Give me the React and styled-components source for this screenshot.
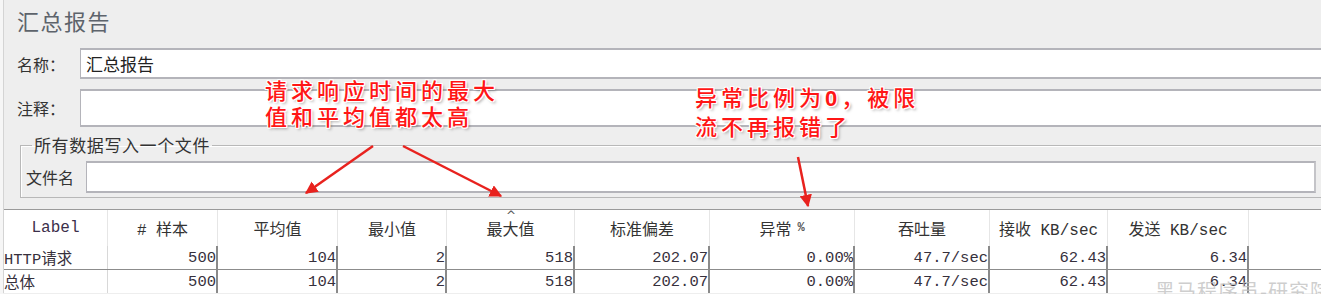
import React from "react";
import styled, { createGlobalStyle } from "styled-components";

const GlobalStyle = createGlobalStyle`
    html, body {
        margin: 0;
        padding: 0;
        background: #eeeeee;
    }
    * {
        box-sizing: border-box;
    }
`;

const cjk = `"Noto Sans CJK SC", "Noto Sans", sans-serif`;
const mono = `"Liberation Mono", "Noto Sans CJK SC", monospace`;

const columns = [
    { title: "Label", width: 104 },
    { title: "# 样本", width: 110 },
    { title: "平均值", width: 120 },
    { title: "最小值", width: 109 },
    { title: "最大值", width: 128, sorted: true },
    { title: "标准偏差", width: 135 },
    { title: "异常 %", width: 145 },
    { title: "吞吐量", width: 135 },
    { title: "接收 KB/sec", width: 118 },
    { title: "发送 KB/sec", width: 141 },
];

const rows = [
    ["HTTP请求", "500", "104", "2", "518", "202.07", "0.00%", "47.7/sec", "62.43", "6.34"],
    ["总体", "500", "104", "2", "518", "202.07", "0.00%", "47.7/sec", "62.43", "6.34"],
];

const gridTemplate = columns.map((c) => `${c.width}px`).join(" ") + " 1fr";

export default function App() {
    return (
        <>
            <GlobalStyle />
            <Root>
                <Panel>
                    <Title>汇总报告</Title>
                    <FieldRow $indent={13}>
                        <FieldLabel>名称：</FieldLabel>
                        <TextBox $height={31}>汇总报告</TextBox>
                    </FieldRow>
                    <FieldRow $indent={13} $gap={10}>
                        <FieldLabel>注释：</FieldLabel>
                        <TextBox $height={38} />
                    </FieldRow>
                    <FileGroup>
                        <legend>所有数据写入一个文件</legend>
                        <FieldRow>
                            <FieldLabel $width={60}>文件名</FieldLabel>
                            <TextBox $height={32} $boxed />
                        </FieldRow>
                    </FileGroup>
                    <Table>
                        <HeaderRow>
                            {columns.map((c) => (
                                <HeaderCell key={c.title} $latin={c.title === "Label"}>
                                    {c.sorted && <SortCaret>^</SortCaret>}
                                    {c.title === "异常 %" ? (
                                        <>
                                            异常 <Percent>%</Percent>
                                        </>
                                    ) : (
                                        c.title
                                    )}
                                </HeaderCell>
                            ))}
                            <HeaderCell $last />
                        </HeaderRow>
                        {rows.map((r, i) => (
                            <DataRow key={i} $first={i === 0}>
                                {r.map((v, j) => (
                                    <DataCell key={j} $label={j === 0}>
                                        {v}
                                    </DataCell>
                                ))}
                                <DataCell $last />
                            </DataRow>
                        ))}
                    </Table>
                </Panel>

                <Note $left={265} $top={76}>
                    请求响应时间的最大
                    <br />
                    值和平均值都太高
                </Note>
                <Note $left={695} $top={83}>
                    异常比例为<b>0</b>，被限
                    <br />
                    流不再报错了
                </Note>
                <Arrows width="1321" height="294" viewBox="0 0 1321 294">
                    <defs>
                        <marker
                            id="head"
                            viewBox="0 0 10 10"
                            refX="9"
                            refY="5"
                            markerWidth="5"
                            markerHeight="5"
                            orient="auto"
                        >
                            <path d="M0 0 L10 5 L0 10 Z" fill="#e8221e" />
                        </marker>
                    </defs>
                    <line x1="373" y1="146" x2="306" y2="193" stroke="#e8221e" strokeWidth="2.5" markerEnd="url(#head)" />
                    <line x1="403" y1="146" x2="501" y2="196" stroke="#e8221e" strokeWidth="2.5" markerEnd="url(#head)" />
                    <line x1="798" y1="157" x2="808" y2="206" stroke="#e8221e" strokeWidth="2.5" markerEnd="url(#head)" />
                </Arrows>
                <Watermark>黑马程序员-研究院</Watermark>
            </Root>
        </>
    );
}

const Root = styled.div`
    position: relative;
    width: 1321px;
    height: 294px;
    overflow: hidden;
    background: #eeeeee;
    background-image: linear-gradient(to right, #f6f6f6 0, #f6f6f6 3px, transparent 3px);
`;

const Panel = styled.div`
    margin-left: 3px;
    width: 1323px;
    border-left: 1px solid #d4d4d4;
    display: flex;
    flex-direction: column;
`;

const Title = styled.div`
    height: 48px;
    padding: 6px 0 0 13px;
    font-family: ${cjk};
    font-size: 22px;
    line-height: 28px;
    letter-spacing: 1.5px;
    color: #5d636b;
`;

const FieldRow = styled.div`
    display: flex;
    align-items: center;
    margin-top: ${(p) => p.$gap || 0}px;
    padding-left: ${(p) => p.$indent || 0}px;
`;

const FieldLabel = styled.div`
    width: ${(p) => p.$width || 63}px;
    flex-shrink: 0;
    font-family: ${cjk};
    font-size: 16px;
    color: #333333;
`;

const TextBox = styled.div`
    flex: 1;
    height: ${(p) => p.$height}px;
    background: #ffffff;
    border-top: 2px solid #b4b4ba;
    border-left: 1px solid #b4b4ba;
    border-bottom: 2px solid #b4b4ba;
    border-right: ${(p) => (p.$boxed ? "2px solid #c4c4c8" : "none")};
    padding-left: 5px;
    display: flex;
    align-items: center;
    font-family: ${cjk};
    font-size: 17px;
    color: #222222;
`;

const FileGroup = styled.fieldset`
    margin: 8px 4px 0 16px;
    padding: 6px 5px 4px 5px;
    border: 1px solid #b8b8b8;
    box-shadow: inset 1px 1px 0 #ffffff;

    legend {
        margin-left: 6px;
        padding: 0 2px;
        font-family: ${cjk};
        font-size: 17px;
        line-height: 20px;
        letter-spacing: 0.6px;
        color: #333333;
    }
`;

const Table = styled.div`
    margin-top: 11px;
    border-top: 1px solid #9a9a9a;
    background: #ffffff;
`;

const HeaderRow = styled.div`
    display: grid;
    grid-template-columns: ${gridTemplate};
    height: 36px;
`;

const HeaderCell = styled.div`
    position: relative;
    display: flex;
    align-items: center;
    justify-content: center;
    border-right: ${(p) => (p.$last ? "none" : "1px solid #e6e6e6")};
    font-family: ${mono};
    font-size: 16px;
    color: ${(p) => (p.$latin ? "#3b2f4a" : "#333333")};
    white-space: nowrap;
`;

const SortCaret = styled.span`
    position: absolute;
    top: -1px;
    left: 59px;
    font-family: "DejaVu Sans", sans-serif;
    font-size: 12px;
    color: #555555;
`;

const Percent = styled.span`
    font-size: 12px;
    font-weight: bold;
    margin-left: 6px;
    color: #555555;
`;

const DataRow = styled.div`
    display: grid;
    grid-template-columns: ${gridTemplate};
    height: ${(p) => (p.$first ? 24 : 23)}px;
    border-bottom: ${(p) => (p.$first ? "1px solid #8c8c8c" : "none")};
`;

const DataCell = styled.div`
    display: flex;
    align-items: center;
    justify-content: ${(p) => (p.$label ? "flex-start" : "flex-end")};
    border-right: ${(p) =>
        p.$last ? "none" : p.$label ? "1px solid #d8d8d8" : "2px solid #8a8a8a"};
    font-family: ${mono};
    font-size: 15.5px;
    color: #36303c;
    white-space: nowrap;
`;

const Note = styled.div`
    position: absolute;
    left: ${(p) => p.$left}px;
    top: ${(p) => p.$top}px;
    font-family: ${cjk};
    font-size: 22px;
    font-weight: 500;
    line-height: 26px;
    letter-spacing: 4px;
    color: #ff1616;
    text-shadow: 1px 0 0 #fff, -1px 0 0 #fff, 0 1px 0 #fff, 0 -1px 0 #fff,
        1px 1px 0 #fff, -1px -1px 0 #fff, 1px -1px 0 #fff, -1px 1px 0 #fff,
        2px 2px 3px rgba(0, 0, 0, 0.35);

    b {
        font-family: "Liberation Sans", sans-serif;
        font-weight: bold;
        letter-spacing: 4px;
    }
`;

const Arrows = styled.svg`
    position: absolute;
    left: 0;
    top: 0;
    pointer-events: none;
`;

const Watermark = styled.div`
    position: absolute;
    left: 1155px;
    top: 276px;
    font-family: ${cjk};
    font-size: 20px;
    letter-spacing: 1px;
    color: rgba(190, 190, 190, 0.75);
    white-space: nowrap;
    pointer-events: none;
`;
